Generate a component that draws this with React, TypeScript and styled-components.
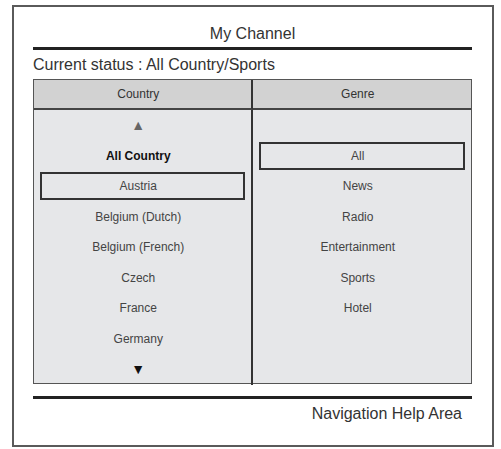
import styled, { createGlobalStyle } from "styled-components";

const GlobalStyle = createGlobalStyle`
  body {
    margin: 0;
    background: #ffffff;
    font-family: "Liberation Sans", Arial, sans-serif;
    color: #333333;
  }
`;

const Frame = styled.div`
  box-sizing: border-box;
  width: 482px;
  height: 442px;
  margin: 5px 0 0 12px;
  border: 2px solid #5a5a5a;
  padding: 0 20px 0 19px;
  display: flex;
  flex-direction: column;
`;

const Title = styled.div`
  padding-top: 17px;
  line-height: 20px;
  font-size: 16px;
  text-align: center;
  color: #333;
  margin-bottom: 3px;
`;

const Rule = styled.div`
  height: 3px;
  background: #222;
`;

const Status = styled.div`
  margin: 3px 0 2px;
  line-height: 24px;
  font-size: 16px;
  color: #333;
`;

const Table = styled.div`
  box-sizing: border-box;
  height: 305px;
  border: 1px solid #555;
  display: grid;
  grid-template-columns: 1fr 1fr;
  grid-template-rows: 30px 1fr;
  background: #e6e7e9;
`;

const HeadCell = styled.div<{ $divider?: boolean }>`
  background: #d2d2d2;
  border-bottom: 2px solid #444;
  border-right: ${(p) => (p.$divider ? "2px solid #333" : "none")};
  display: flex;
  align-items: center;
  justify-content: center;
  padding-right: 8px;
  font-size: 12px;
  color: #333;
`;

const Column = styled.div<{ $divider?: boolean }>`
  border-right: ${(p) => (p.$divider ? "2px solid #333" : "none")};
  display: flex;
  flex-direction: column;
`;

const Item = styled.div<{ $bold?: boolean }>`
  height: 30.5px;
  flex: none;
  display: flex;
  align-items: center;
  justify-content: center;
  box-sizing: border-box;
  padding: 1px 6px;
  font-size: 12px;
  font-weight: ${(p) => (p.$bold ? "bold" : "normal")};
  color: ${(p) => (p.$bold ? "#111" : "#444")};
`;

const ItemBox = styled.div<{ $selected?: boolean }>`
  width: 100%;
  height: 28px;
  box-sizing: border-box;
  border: 2px solid ${(p) => (p.$selected ? "#333" : "transparent")};
  display: flex;
  align-items: center;
  justify-content: center;
  padding-right: 8px;
`;

const Arrow = styled.span<{ $dark?: boolean }>`
  font-size: 14px;
  line-height: 14px;
  color: ${(p) => (p.$dark ? "#111" : "#666")};
`;

const HelpRow = styled.div`
  margin-top: 12px;
`;

const HelpText = styled.div`
  text-align: right;
  padding-right: 10px;
  line-height: 22px;
  margin-top: 4px;
  font-size: 16px;
  color: #333;
`;

const countries = ["Austria", "Belgium (Dutch)", "Belgium (French)", "Czech", "France", "Germany"];
const genres = ["All", "News", "Radio", "Entertainment", "Sports", "Hotel"];

function App() {
  return (
    <>
      <GlobalStyle />
      <Frame>
        <Title>My Channel</Title>
        <Rule />
        <Status>Current status : All Country/Sports</Status>
        <Table>
          <HeadCell $divider>Country</HeadCell>
          <HeadCell>Genre</HeadCell>
          <Column $divider>
            <Item>
              <ItemBox>
                <Arrow>▲</Arrow>
              </ItemBox>
            </Item>
            <Item $bold>
              <ItemBox>All Country</ItemBox>
            </Item>
            {countries.map((c) => (
              <Item key={c}>
                <ItemBox $selected={c === "Austria"}>{c}</ItemBox>
              </Item>
            ))}
            <Item>
              <ItemBox>
                <Arrow $dark>▼</Arrow>
              </ItemBox>
            </Item>
          </Column>
          <Column>
            <Item />
            {genres.map((g) => (
              <Item key={g}>
                <ItemBox $selected={g === "All"}>{g}</ItemBox>
              </Item>
            ))}
          </Column>
        </Table>
        <HelpRow>
          <Rule />
          <HelpText>Navigation Help Area</HelpText>
        </HelpRow>
      </Frame>
    </>
  );
}

export default App;
